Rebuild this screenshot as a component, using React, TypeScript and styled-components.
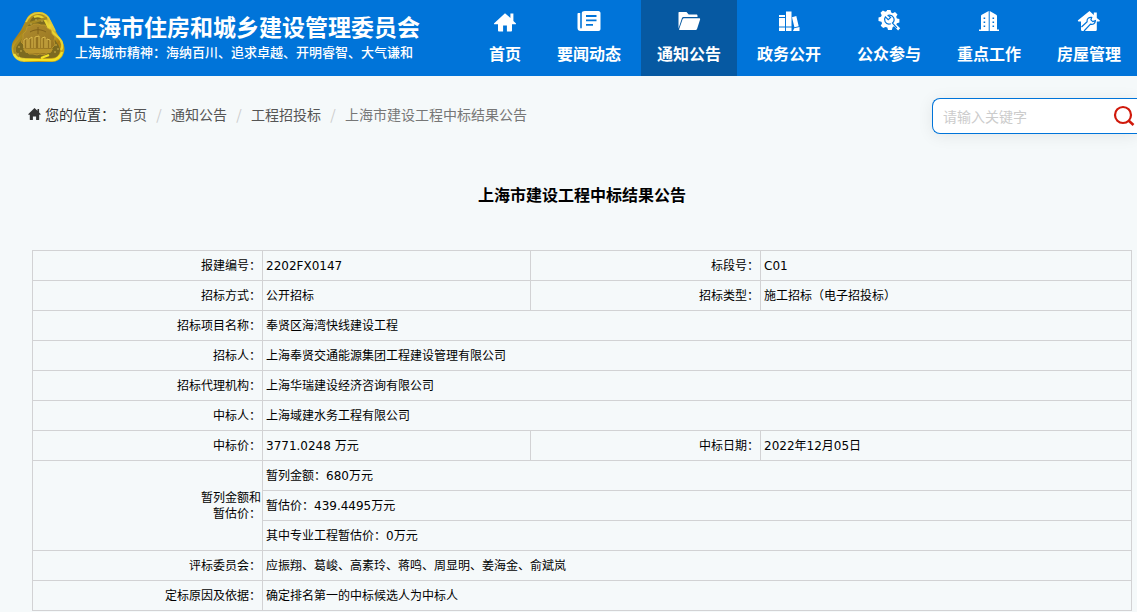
import React from "react";
import styled, { createGlobalStyle } from "styled-components";

const GlobalStyle = createGlobalStyle`
  *, *::before, *::after { box-sizing: border-box; }
  html { background: #f5f9fa; }
  body {
    margin: 0;
    overflow-x: hidden;
    color: #000;
    font-family: "Noto Sans CJK SC", sans-serif;
  }
`;

const Header = styled.header`
  display: flex;
  justify-content: space-between;
  height: 76px;
  background: #0074d9;
  color: #fff;
`;

const Brand = styled.a`
  display: flex;
  align-items: center;
  gap: 10px;
  padding: 0 0 2px 11px;
  color: inherit;
  text-decoration: none;
  white-space: nowrap;
`;

const BrandText = styled.span`
  display: flex;
  flex-direction: column;
  padding-bottom: 2px;
`;

const BrandName = styled.strong`
  font-size: 23px;
  line-height: 32px;
  font-weight: 700;
`;

const BrandMotto = styled.span`
  font-size: 13px;
  line-height: 20px;
  font-weight: 500;
`;

const NavList = styled.ul`
  display: flex;
  gap: 4px;
  height: 100%;
  margin: 0;
  padding: 0;
  list-style: none;
`;

const NavLink = styled.a<{ $active?: boolean }>`
  display: flex;
  flex-direction: column;
  align-items: center;
  gap: 8px;
  height: 100%;
  padding: 9px 16px 0;
  background: ${(p) => (p.$active ? "#0659a2" : "transparent")};
  color: #fff;
  font-size: 16px;
  line-height: 24px;
  font-weight: 700;
  text-decoration: none;
  white-space: nowrap;
`;

const Main = styled.main`
  padding: 22px 5px 0 32px;
`;

const TopBar = styled.div`
  display: flex;
  align-items: center;
  justify-content: space-between;
  height: 36px;
  margin: 0 -5px 0 -4px;
`;

const Breadcrumb = styled.nav`
  display: flex;
  align-items: center;
  gap: 4px;
  padding-bottom: 4px;
  color: #333;
  font-size: 14px;
  line-height: 20px;
  white-space: nowrap;
`;

const Crumbs = styled.ol`
  display: flex;
  margin: 0;
  padding: 0;
  list-style: none;
`;

const Crumb = styled.li`
  display: flex;
  color: #777;

  &:not(:last-child)::after {
    content: "/";
    width: 24px;
    color: #ccc;
    text-align: center;
  }
`;

const CrumbLink = styled.a`
  color: #555;
  text-decoration: none;
`;

const SearchForm = styled.form`
  display: flex;
  align-items: center;
  width: 205px;
  height: 36px;
  padding: 0 2px 0 10px;
  border: 1px solid #0074d9;
  border-right: 0;
  border-radius: 8px 0 0 8px;
  background: #fff;
  box-shadow: 0 2px 16px rgba(0, 0, 0, 0.08);
`;

const SearchInput = styled.input`
  flex: 1;
  min-width: 0;
  padding: 0;
  border: 0;
  outline: 0;
  background: transparent;
  font: 14px/20px "Noto Sans CJK SC", sans-serif;

  &::placeholder { color: #ccc; opacity: 1; }
`;

const SearchButton = styled.button`
  display: flex;
  padding: 0;
  border: 0;
  background: transparent;
  color: #d0190b;
  cursor: pointer;
`;

const Title = styled.h1`
  margin: 47px 0 43px;
  font-size: 16px;
  line-height: 26px;
  font-weight: 700;
  text-align: center;
`;

const ResultTable = styled.table`
  width: 100%;
  table-layout: fixed;
  border-collapse: collapse;
  font-family: "DejaVu Sans", "Noto Sans CJK SC", sans-serif;
  font-size: 12px;
  line-height: 16px;
`;

const LabelCol = styled.col`
  width: 230px;
`;

const ValueCol = styled.col`
  width: 268px;
`;

const Label = styled.th`
  height: 30px;
  padding: 0 1px;
  border: 1px solid #d2d2d4;
  font-weight: 400;
  text-align: right;
`;

const Value = styled.td`
  height: 30px;
  padding: 0 3px;
  border: 1px solid #d2d2d4;
`;

function Emblem() {
  return (
    <svg width="54" height="52" viewBox="0 0 54 52" aria-hidden="true">
      <defs>
        <linearGradient id="gold" x1="0" y1="0" x2="1" y2="1">
          <stop offset="0" stopColor="#d8c83c" />
          <stop offset="0.3" stopColor="#a8811a" />
          <stop offset="0.5" stopColor="#ecd93c" />
          <stop offset="0.75" stopColor="#a87b14" />
          <stop offset="1" stopColor="#e6ca1c" />
        </linearGradient>
        <linearGradient id="disc" x1="0" y1="0" x2="1" y2="1">
          <stop offset="0" stopColor="#b08d2f" />
          <stop offset="1" stopColor="#94721f" />
        </linearGradient>
      </defs>
      <path d="M27 1c-6 0-10 3-12 8L10 19 3 29C0 33 0 40 2 44c2 4 6 7 11 7h28c5 0 9-3 11-7 3-6 1-11-2-15l-6-10-5-10C37 4 33 1 27 1Z" fill="url(#gold)" />
      <path d="M27 5c-4 0-7 2-8 6l-5 11-7 10c-3 4-3 8-1 11 2 3 4 4 8 4h26c4 0 6-1 8-4 2-4 1-7-2-11l-6-10-5-11c-1-4-4-6-8-6Z" fill="#7c6a20" />
      <path d="M15 11c3-7 8-9 13-9 6 0 9 3 11 8l5 10" fill="none" stroke="#e3ca35" strokeWidth="1.8" />
      <path d="M23 6c5-2 10 0 12 5l3 7 10 9c4 4 4 9 2 12" fill="none" stroke="#e9d431" strokeWidth="2.2" />
      <path d="M36 7 16 13l-5 13-6 8c-3 4-2 9 3 12" fill="none" stroke="#a78a22" strokeWidth="2.4" />
      <g fill="#b09a3c">
        <circle cx="20" cy="13" r="1" />
        <circle cx="25" cy="9" r="1" />
        <circle cx="31" cy="10" r="1" />
        <circle cx="8" cy="36" r="1" />
        <circle cx="10" cy="40" r="1" />
        <circle cx="7" cy="43" r="1" />
        <circle cx="45" cy="34" r="1" />
        <circle cx="47" cy="38" r="1" />
        <circle cx="44" cy="41" r="1" />
      </g>
      <path d="m27 13 3 1 4 0 2 3 4 2 1 4 3 3-1 4 1 4-3 3-1 4-4 1-3 2-4-1-3 1-4-1-4 0-2-3-3-2 0-4-3-3 2-4 0-4 3-3 1-4 4-1 3-2Z" fill="url(#disc)" stroke="#c09a2c" strokeWidth="0.8" />
      <path d="M12 38h30l-3 4H15Z" fill="#b8942c" />
      <path d="M13 37v-8l3-2v10M18 37V28l3-2v11M24 37V26l4-1v12M31 37V27l3-1v11M36 37v-9l3 1v8" fill="#94721f" stroke="#dab94c" strokeWidth="1" />
      <path d="M19 21c5-3 11-3 16 0M27 16v7" fill="none" stroke="#80611a" strokeWidth="1" />
      <path d="M12 49h29c5 0 9-4 10-8M30 47l8-3" fill="none" stroke="#f4e225" strokeWidth="2.4" />
      <path d="M3 43c2 4 6 6 11 6" fill="none" stroke="#efdf3a" strokeWidth="2.4" />
    </svg>
  );
}

type IconName = "home" | "news" | "folder" | "books" | "gear" | "building" | "repair";

const iconShapes: Record<IconName, React.ReactNode> = {
  home: (
    <path d="M12 4.200 1.200 14.200c-.5.500-.2 1.100.4 1.100H5v6.200c0 .6.3.9.9.9h4.200v-6h3.800v6h4.200c.6 0 .9-.3.9-.9v-6.200h3.400c.6 0 .9-.6.4-1.100l-2.400-2.300V4.500h-3v4.400Z" />
  ),
  news: (
    <path fillRule="evenodd" d="M8 2h13.500C22.600 2 23.500 3 23.500 4v16c0 1.100-.9 2-2 2H3.500C1.700 22 .5 20.800.5 19V5c0-.6.4-1 1-1h1.700v14.500c0 .7.3 1 .8 1s.8-.3.8-1V4c0-1.100 1-2 3.200-2Zm1 4v2h10.500V6Zm0 4.500v1.800h10.500v-1.800ZM9 15v1.800h7V15Z" />
  ),
  folder: (
    <>
      <path d="M2 3h7.500l2.200 2.500h7.600c.8 0 1.200.5 1.200 1.200V8H6.800c-1 0-1.600.4-1.900 1.300L1.500 19.500V4c0-.6.1-1 .5-1Z" />
      <path d="M7 9.200h15c.9 0 1.300.5 1.100 1.300l-3 9.200c-.3.9-.8 1.300-1.700 1.300H3c-.7 0-1-.4-.8-1l3.400-9.800c.3-.7.7-1 1.400-1Z" />
    </>
  ),
  books: (
    <>
      <path d="M2 6h6v2H2ZM2 9h6v8.500H2ZM2 18.500h6V22H2ZM9 2.500h5.500v15H9ZM9 18.500h5.500V22H9Z" />
      <path d="m15 8.200 4.300-1.100 2.400 10.200-4.300.9Zm2.200 11 5.300-1.200V22H16Z" />
    </>
  ),
  gear: (
    <>
      <path d="m10 1 3.500.1.700 2.500 1.600.7 2.200-1.300 2.500 2.400-1.300 2.300.7 1.700 2.500.7v3.500l-2.500.6-.6 1.200 3.900 3.800-2.100 2.200-4-4.100-1.400.6-.9 3.100H11l-.7-2.400-1.800-.7-2.300 1.200-2.500-2.400 1.400-2.400-.7-1.600L1.500 12V8.500L4 7.800l.7-1.600-1.200-2.400 2.400-2.400 2.400 1.400 1.500-.7Z" />
      <path d="M10.500 6.600c2.300-1 4.800-.2 6 1.900 1 1.900.5 4.200-1.100 5.500m-1.500.7c-2.200.8-4.700-.1-5.800-2-1-1.700-.7-3.400.3-4.800l2.800 2.800 2.400-2.100-2.500-2.400M15 13.600l4.900 5.200" fill="none" stroke="#0074d9" strokeWidth="1.200" />
    </>
  ),
  building: (
    <>
      <path fillRule="evenodd" d="M4 7c0-.6.3-1 .8-1.300L11.700 2v20H2v-1.500h2Zm2.600 1.500v1.500h1.600V8.500Zm0 4v1.500h1.600v-1.500Zm0 4v1.500h1.600v-1.500Z" />
      <path fillRule="evenodd" d="m12.700 2 6.500 3.700c.5.3.8.7.8 1.300v13.500h2V22h-9.300Zm2.800 6.500v1.500h1.600V8.500Zm0 4v1.500h1.600v-1.500Zm0 4v1.500h1.600v-1.500Z" />
    </>
  ),
  repair: (
    <>
      <path d="M12.500 2 1 11.300c-.4.500 0 1.100.5 1.100H4v8.100c0 .9.5 1.500 1.400 1.500h12.800c1 0 1.600-.6 1.600-1.600v-8h2.400c.7 0 .9-.8.4-1.200L19.800 9V3.500h-3v2.600Z" />
      <path d="m7 22 6.500-6.800c2.700.6 4.700-.8 4.900-3.600l-2.600 1-1.900-1.700.8-2.500c-3.200-.4-5.100 1.600-4.600 4.400L4.500 18" fill="none" stroke="#0074d9" strokeWidth="1.200" />
    </>
  ),
};

function NavIcon({ name }: { name: IconName }) {
  return (
    <svg width="24" height="24" viewBox="0 0 24 24" fill="currentColor" aria-hidden="true">
      {iconShapes[name]}
    </svg>
  );
}

const navItems: { label: string; icon: IconName; active?: boolean }[] = [
  { label: "首页", icon: "home" },
  { label: "要闻动态", icon: "news" },
  { label: "通知公告", icon: "folder", active: true },
  { label: "政务公开", icon: "books" },
  { label: "公众参与", icon: "gear" },
  { label: "重点工作", icon: "building" },
  { label: "房屋管理", icon: "repair" },
];

type Field = [label: string, value: string];

function Row({ fields }: { fields: Field[] }) {
  return (
    <tr>
      {fields.map(([label, value]) => (
        <React.Fragment key={label}>
          <Label scope="row">{label}：</Label>
          <Value colSpan={fields.length === 1 ? 3 : 1}>{value}</Value>
        </React.Fragment>
      ))}
    </tr>
  );
}

const leadingRows: Field[][] = [
  [["报建编号", "2202FX0147"], ["标段号", "C01"]],
  [["招标方式", "公开招标"], ["招标类型", "施工招标（电子招投标）"]],
  [["招标项目名称", "奉贤区海湾快线建设工程"]],
  [["招标人", "上海奉贤交通能源集团工程建设管理有限公司"]],
  [["招标代理机构", "上海华瑞建设经济咨询有限公司"]],
  [["中标人", "上海域建水务工程有限公司"]],
  [["中标价", "3771.0248 万元"], ["中标日期", "2022年12月05日"]],
];

const trailingRows: Field[][] = [
  [["评标委员会", "应振翔、葛峻、高素玲、蒋鸣、周显明、姜海金、俞斌岚"]],
  [["定标原因及依据", "确定排名第一的中标候选人为中标人"]],
];

export default function App() {
  return (
    <>
      <GlobalStyle />
      <Header>
        <Brand href="#">
          <Emblem />
          <BrandText>
            <BrandName>上海市住房和城乡建设管理委员会</BrandName>
            <BrandMotto>上海城市精神：海纳百川、追求卓越、开明睿智、大气谦和</BrandMotto>
          </BrandText>
        </Brand>
        <nav>
          <NavList>
            {navItems.map((item) => (
              <li key={item.label}>
                <NavLink href="#" $active={item.active} aria-current={item.active ? "page" : undefined}>
                  <NavIcon name={item.icon} />
                  {item.label}
                </NavLink>
              </li>
            ))}
          </NavList>
        </nav>
      </Header>
      <Main>
        <TopBar>
          <Breadcrumb>
            <svg width="13" height="14" viewBox="0 0 13 14" fill="#333" aria-hidden="true">
              <path d="M6.500 1 .4 7c-.3.400-.1.800.4.800h1v4.700c0 .4.200.6.600.6h2.500V9.500h3.200v3.600h2.500c.4 0 .6-.2.600-.6V7.800h1c.5 0 .7-.4.400-.8l-1.500-1.500V2H9.500v1.800Z" />
            </svg>
            <span>您的位置：</span>
            <Crumbs>
              <Crumb><CrumbLink href="#">首页</CrumbLink></Crumb>
              <Crumb><CrumbLink href="#">通知公告</CrumbLink></Crumb>
              <Crumb><CrumbLink href="#">工程招投标</CrumbLink></Crumb>
              <Crumb>上海市建设工程中标结果公告</Crumb>
            </Crumbs>
          </Breadcrumb>
          <SearchForm role="search">
            <SearchInput type="text" aria-label="搜索" placeholder="请输入关键字" />
            <SearchButton type="button" aria-label="搜索">
              <svg width="22" height="22" viewBox="0 0 22 22" fill="none" stroke="currentColor" strokeWidth="2.200" aria-hidden="true">
                <circle cx="10" cy="10" r="8" />
                <path d="m15.500 15.500 5 4.500" strokeWidth="2.600" />
              </svg>
            </SearchButton>
          </SearchForm>
        </TopBar>
        <Title>上海市建设工程中标结果公告</Title>
        <ResultTable>
          <colgroup>
            <LabelCol />
            <ValueCol />
            <LabelCol />
            <col />
          </colgroup>
          <tbody>
            {leadingRows.map((fields) => (
              <Row key={fields[0][0]} fields={fields} />
            ))}
            <tr>
              <Label scope="rowgroup" rowSpan={3}>
                暂列金额和
                <br />
                暂估价：
              </Label>
              <Value colSpan={3}>暂列金额：680万元</Value>
            </tr>
            <tr>
              <Value colSpan={3}>暂估价：439.4495万元</Value>
            </tr>
            <tr>
              <Value colSpan={3}>其中专业工程暂估价：0万元</Value>
            </tr>
            {trailingRows.map((fields) => (
              <Row key={fields[0][0]} fields={fields} />
            ))}
          </tbody>
        </ResultTable>
      </Main>
    </>
  );
}
